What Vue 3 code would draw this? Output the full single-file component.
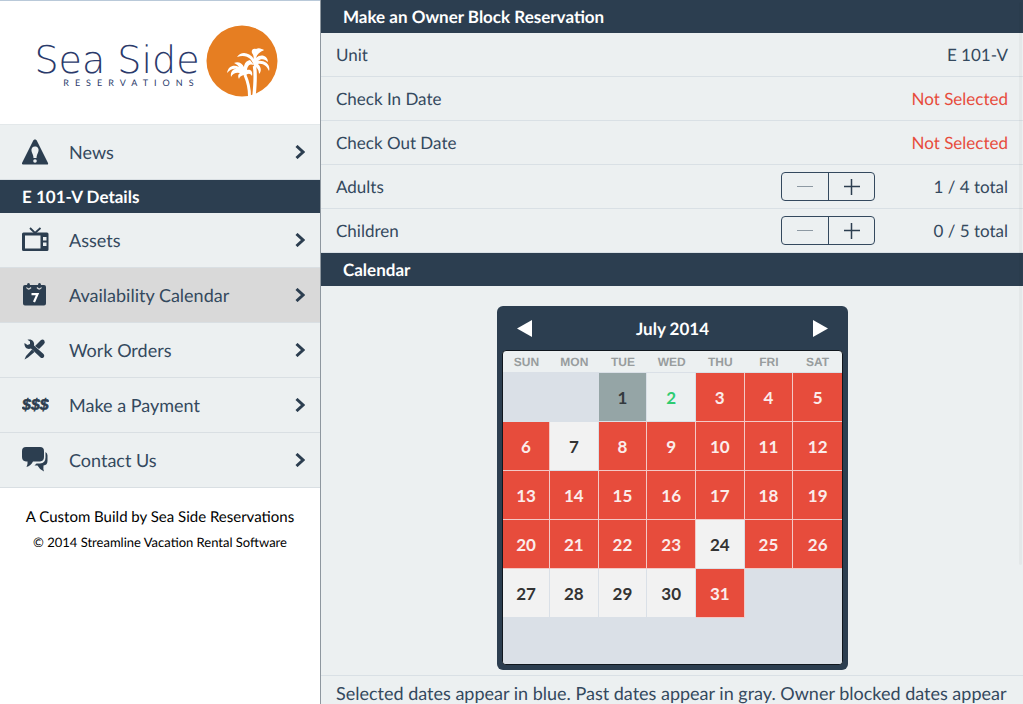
<template>
<div class="app">
    <aside class="sidebar">
        <a href="#" class="brand">
            <div class="brand-text">
                <span class="brand-name">Sea Side</span>
                <span class="brand-sub">RESERVATIONS</span>
            </div>
            <svg class="brand-mark" viewBox="0 0 72 72" aria-hidden="true">
                <circle cx="36" cy="36" r="35.5" fill="#e67e22" />
                <g fill="none" stroke="#fff" stroke-linecap="butt">
                    <path d="M39 50C42 57 43.500 63 43.500 71" stroke-width="3" />
                    <path d="M48.500 41C50 51 49 61 48 71" stroke-width="3.400" />
                </g>
                <g fill="#fff">
                    <path d="M48 41C46 34 41 29 31 32C35 26 43 27 48 34C46 29 50 24 58 25C54 27 51 29 50 33C55 28 62 31 62 37C59 34 55 33 52 36C58 35 65 39 63 46C61 41 57 38 52 39C55 42 56 46 53 49C53 45 51 42 48 41Z" />
                    <path d="M48 40C42 38 38 42 41 48C36 43 38 36 44 35Z" />
                    <path d="M39 51C35 47 28 46 25 52C24 46 28 43 32 44C28 43 24 44 21 48C22 41 28 39 33 42C31 39 28 38 28 38C32 36 36 38 38 42C39 38 42 38 44 39C42 41 41 43 41 45C45 44 47 47 46 51C44 48 42 48 39 51Z" />
                    <path d="M38 47C33 47 31 50 33 54C34 51 36 50 40 50Z" />
                    <path d="M46 28C45 25 47 23 50 24C53 22 56 24 58 25C53 26 50 28 49 33Z" />
                </g>
            </svg>
        </a>

        <nav>
            <a v-for="item in topLinks" :key="item.label" href="#" class="nav-item">
                <NavIcon :name="item.icon" />
                <span class="nav-label">{{ item.label }}</span>
                <Chevron />
            </a>
            <h2 class="bar">E 101-V Details</h2>
            <a
                v-for="item in unitLinks"
                :key="item.label"
                href="#"
                class="nav-item"
                :class="{ active: active === item.label }"
                @click.prevent="active = item.label"
            >
                <NavIcon :name="item.icon" />
                <span class="nav-label">{{ item.label }}</span>
                <Chevron />
            </a>
        </nav>

        <footer class="credits">
            <p>A Custom Build by Sea Side Reservations</p>
            <p class="copyright">© 2014 Streamline Vacation Rental Software</p>
        </footer>
    </aside>

    <main class="content">
        <h1 class="bar">Make an Owner Block Reservation</h1>
        <div v-for="row in details" :key="row.label" class="row">
            <span>{{ row.label }}</span>
            <span class="value" :class="{ missing: row.missing }">{{ row.value }}</span>
        </div>
        <div v-for="guest in guests" :key="guest.label" class="row">
            <span>{{ guest.label }}</span>
            <div class="stepper">
                <button
                    type="button"
                    :disabled="guest.count <= guest.min"
                    :aria-label="'Fewer ' + guest.label"
                    @click="guest.count--"
                >
                    <svg viewBox="0 0 16 16"><path d="M0 7.500H16" /></svg>
                </button>
                <button
                    type="button"
                    :disabled="guest.count >= guest.max"
                    :aria-label="'More ' + guest.label"
                    @click="guest.count++"
                >
                    <svg viewBox="0 0 16 16"><path d="M0 7.500H16M7.500 0V16" /></svg>
                </button>
            </div>
            <span class="value total">{{ guest.count }} / {{ guest.max }} total</span>
        </div>

        <h2 class="bar">Calendar</h2>
        <section class="calendar-row">
            <div class="calendar">
                <div class="calendar-head">
                    <button type="button" aria-label="Previous month">
                        <svg viewBox="0 0 15 17"><path d="M15 0V17L0 8.500Z" /></svg>
                    </button>
                    <span>July 2014</span>
                    <button type="button" aria-label="Next month">
                        <svg viewBox="0 0 15 17"><path d="M0 0V17L15 8.500Z" /></svg>
                    </button>
                </div>
                <div class="month">
                    <table>
                        <thead>
                            <tr>
                                <th v-for="day in weekdays" :key="day" scope="col">{{ day }}</th>
                            </tr>
                        </thead>
                        <tbody>
                            <tr v-for="(week, w) in weeks" :key="w">
                                <td v-for="(cell, d) in week" :key="d" :class="cell.state">
                                    <button v-if="cell.day" type="button" :disabled="cell.state !== 'open'">
                                        {{ cell.day }}
                                    </button>
                                </td>
                            </tr>
                        </tbody>
                    </table>
                </div>
            </div>
        </section>
        <p class="note">Selected dates appear in blue. Past dates appear in gray. Owner blocked dates appear</p>
        <div class="scroll-thumb"></div>
    </main>
</div>
</template>

<script setup>
import { h, ref } from 'vue';

const icons = {
    news: [
        h('path', { d: 'M13 0.500C14 0.500 14.500 1 15 2L26 24C26.300 25 26 25.500 25 25.500H1C0 25.500-0.300 25 0 24L11 2C11.500 1 12 0.500 13 0.500Z' }),
        h('path', { fill: '#ecf0f1', d: 'M13 7.500C15.500 7.500 17 9.500 16.500 12C16 14.500 14.500 16 14.500 19H11.500C11.500 16 10 14.500 9.500 12C9 9.500 10.500 7.500 13 7.500Z' }),
        h('circle', { fill: '#ecf0f1', cx: 13, cy: 22, r: 1.8 })
    ],
    tv: [
        h('path', { fill: 'none', stroke: 'currentColor', 'stroke-width': 1.8, d: 'M8 1L13 6L18.500 1' }),
        h('path', { 'fill-rule': 'evenodd', d: 'M1.500 5.500H25Q26.500 5.500 26.500 7V22.500Q26.500 24 25 24H1.500Q0 24 0 22.500V7Q0 5.500 1.500 5.500ZM3 8.500V21.500H18.500V8.500ZM21 10V13.500H24.500V10ZM21 15.500V19H24.500V15.500Z' })
    ],
    calendar: [
        h('path', { d: 'M3 3H5Q5 1 6.500 1T8 3H16Q16 1 17.500 1T19 3H22Q24 3 24 5V21.500Q24 23.500 22 23.500H3Q1 23.500 1 21.500V5Q1 3 3 3Z' }),
        h('path', { fill: 'none', stroke: '#d9d9d9', 'stroke-width': 1.3, d: 'M4.500 5.500Q6.500 8.500 9 5.500M15 5.500Q17.500 8.500 19.500 5.500' }),
        h('path', { fill: 'none', stroke: '#fff', 'stroke-width': 2.2, d: 'M9.500 12.200H15.500L12 20' })
    ],
    tools: [
        h('path', { d: 'M2.500 6L5.500 8L8 7L8 4.500L5.500 2.800C9.500 1.500 13 4.500 12 8.500L21.500 17C23.500 19 21 22.500 18.500 20.500L9 11.500C5 13 2 10 2.500 6Z' }),
        h('path', { d: 'M16.500 5.500L19 3Q21 2 22.300 3.500Q23.500 5.500 22 7L17 12L13 9ZM10 12.500L12.500 15L6 20.500L2.500 22.500L4 19Z' })
    ],
    money: [
        h('text', { x: 0, y: 18, class: 'money' }, '$$$')
    ],
    chat: [
        h('path', { d: 'M4 0H18Q22 0 22 4V10Q22 14 18 14.500H11C9.500 17.500 7.500 19 4.500 20Q6 17.500 5.500 14.500H4Q0 14 0 10V4Q0 0 4 0Z' }),
        h('path', { d: 'M23.500 5Q25.500 6 25.500 8.500V14Q25.500 18 21.500 18.500Q21 21.500 22 24.500Q17.500 22.500 15.500 18.500H12.500L14.500 16.500H18Q23.500 16 23.500 10.500Z' })
    ]
};

const NavIcon = ({ name }) => h(
    'svg',
    { class: 'nav-icon', viewBox: '0 0 27 26', 'aria-hidden': 'true' },
    icons[name]
);
NavIcon.props = ['name'];

const Chevron = () => h(
    'svg',
    { class: 'chevron', viewBox: '0 0 10 14', 'aria-hidden': 'true' },
    [h('path', { d: 'M1.500 1L8 7L1.500 13' })]
);

const active = ref('Availability Calendar');

const topLinks = [{ label: 'News', icon: 'news' }];

const unitLinks = [
    { label: 'Assets', icon: 'tv' },
    { label: 'Availability Calendar', icon: 'calendar' },
    { label: 'Work Orders', icon: 'tools' },
    { label: 'Make a Payment', icon: 'money' },
    { label: 'Contact Us', icon: 'chat' }
];

const details = [
    { label: 'Unit', value: 'E 101-V' },
    { label: 'Check In Date', value: 'Not Selected', missing: true },
    { label: 'Check Out Date', value: 'Not Selected', missing: true }
];

const guests = ref([
    { label: 'Adults', count: 1, min: 1, max: 4 },
    { label: 'Children', count: 0, min: 0, max: 5 }
]);

const weekdays = ['SUN', 'MON', 'TUE', 'WED', 'THU', 'FRI', 'SAT'];
const openDays = [7, 24, 27, 28, 29, 30];
const firstWeekday = 2;

const stateOf = (day) => {
    if (day < 1 || day > 31) return 'blank';
    if (day === 1) return 'past';
    if (day === 2) return 'today';
    return openDays.includes(day) ? 'open' : 'booked';
};

const weeks = Array.from({ length: 6 }, (_, w) =>
    Array.from({ length: 7 }, (_, d) => {
        const day = w * 7 + d + 1 - firstWeekday;
        const state = stateOf(day);
        return { day: state === 'blank' ? null : day, state };
    })
);
</script>

<style>
body {
    background: #fff;
}
</style>

<style scoped>
.app {
    display: grid;
    grid-template-columns: 321px 1fr;
    min-height: 100vh;
    font-family: Lato, sans-serif;
    font-size: 18px;
    color: #34495e;
    text-rendering: geometricPrecision;
}

.sidebar {
    background: #fff;
    border-right: 1px solid #8e979f;
}

.brand {
    display: flex;
    align-items: center;
    justify-content: center;
    gap: 6px;
    box-sizing: border-box;
    height: 125px;
    padding: 0 8px 4px 0;
    border-top: 1px solid #b9c9d9;
    border-bottom: 1px solid #e3e8ea;
    color: #2b3a6b;
    text-decoration: none;
}

.brand-text {
    display: flex;
    flex-direction: column;
    align-items: flex-end;
    padding-top: 12px;
}

.brand-name {
    font-family: "DejaVu Sans", "DejaVu Sans Light", sans-serif;
    font-weight: 200;
    font-size: 38px;
    line-height: 32px;
}

.brand-sub {
    font-size: 9px;
    line-height: 14px;
    letter-spacing: 6px;
}

.brand-mark {
    width: 72px;
    height: 72px;
}

.nav-item {
    display: flex;
    align-items: center;
    box-sizing: border-box;
    height: 55px;
    padding: 0 15px 0 22px;
    background: #ecf0f1;
    border-bottom: 1px solid #d9dfe3;
    color: #34495e;
    text-decoration: none;
}

.nav-item.active {
    background: #d9d9d9;
}

.nav-icon {
    width: 27px;
    height: 26px;
    margin-right: 20px;
    color: #2c3e50;
    fill: currentColor;
}

.nav-icon :deep(.money) {
    font: italic 700 16px "Liberation Sans", Arial, sans-serif;
    stroke: currentColor;
    stroke-width: 0.6;
}

.nav-label {
    flex: 1;
}

.chevron {
    width: 10px;
    height: 14px;
    fill: none;
    stroke: #2c3e50;
    stroke-width: 3;
}

.bar {
    margin: 0;
    padding: 0 22px;
    background: #2c3e50;
    color: #fff;
    font-size: 17px;
    font-weight: 700;
    line-height: 33px;
}

.credits {
    padding-top: 17px;
    text-align: center;
    color: #000;
    font-size: 15px;
}

.credits p {
    margin: 0;
    line-height: 25px;
}

.credits .copyright {
    font-size: 13px;
}

.content {
    position: relative;
    background: #ecf0f1;
}

.row {
    display: flex;
    align-items: center;
    box-sizing: border-box;
    height: 44px;
    padding: 0 15px;
    border-bottom: 1px solid #d9e0e5;
    font-size: 17px;
}

.value {
    margin-left: auto;
    text-align: right;
}

.value.missing {
    color: #e74c3c;
}

.value.total {
    width: 133px;
    margin-left: 0;
}

.stepper {
    display: flex;
    margin-left: auto;
    border: 1px solid #34495e;
    border-radius: 4px;
}

.stepper button {
    display: grid;
    place-items: center;
    width: 46px;
    height: 27px;
    padding: 0;
    border: 0;
    background: none;
    cursor: pointer;
}

.stepper button + button {
    border-left: 1px solid #34495e;
}

.stepper svg {
    width: 16px;
    height: 16px;
    stroke: #2c3e50;
    stroke-width: 1.5;
}

.stepper button:disabled svg {
    stroke: #8d99a3;
    stroke-width: 1;
}

.calendar-row {
    display: flex;
    justify-content: center;
    padding: 20px 0 5px 1px;
    border-bottom: 1px solid #d9e0e5;
}

.calendar {
    box-sizing: border-box;
    width: 351px;
    padding: 0 5px 5px;
    border-radius: 6px;
    background: #2c3e50;
}

.calendar-head {
    display: flex;
    align-items: center;
    justify-content: space-between;
    height: 44px;
    padding: 0 15px;
    color: #fff;
    font-size: 17px;
    font-weight: 700;
}

.calendar-head button {
    display: flex;
    padding: 0;
    border: 0;
    background: none;
    cursor: pointer;
}

.calendar-head svg {
    width: 15px;
    height: 17px;
    fill: #fff;
}

.month {
    overflow: hidden;
    border: 1px solid #10171e;
    border-radius: 4px;
    background: #ecf0f1;
}

table {
    width: 100%;
    table-layout: fixed;
    border-collapse: separate;
    border-spacing: 0;
}

th {
    height: 21px;
    padding: 0;
    border-bottom: 1px solid #dae0e7;
    color: #989d9e;
    font: 12px "Liberation Sans", Arial, sans-serif;
    font-weight: 700;
}

th:first-child {
    width: 47px;
}

td {
    box-sizing: border-box;
    height: 49px;
    padding: 0;
    border-right: 1px solid #dae0e7;
    border-bottom: 1px solid #dae0e7;
}

td:last-child {
    border-right: 0;
}

tr:last-child td {
    height: 46px;
    border-bottom: 0;
}

td button {
    display: block;
    width: 100%;
    height: 48px;
    padding: 0;
    border: 0;
    background: none;
    color: inherit;
    font: 700 17px Lato, sans-serif;
}

.blank {
    background: #dae0e7;
}

.past {
    background: #95a5a6;
    color: #33393d;
}

.today {
    background: #ecf0f1;
    color: #2ecc71;
}

.open {
    background: #f2f2f2;
    color: #333;
}

.booked {
    background: #e74c3c;
    border-color: #f3c9c6;
    color: #fbeceb;
}

.note {
    margin: 0;
    padding: 7px 15px 0;
    line-height: 21px;
}

.scroll-thumb {
    position: absolute;
    top: 2px;
    right: 1px;
    width: 3px;
    height: 80%;
    border-radius: 2px;
    background: rgba(0, 0, 0, 0.03);
}
</style>
